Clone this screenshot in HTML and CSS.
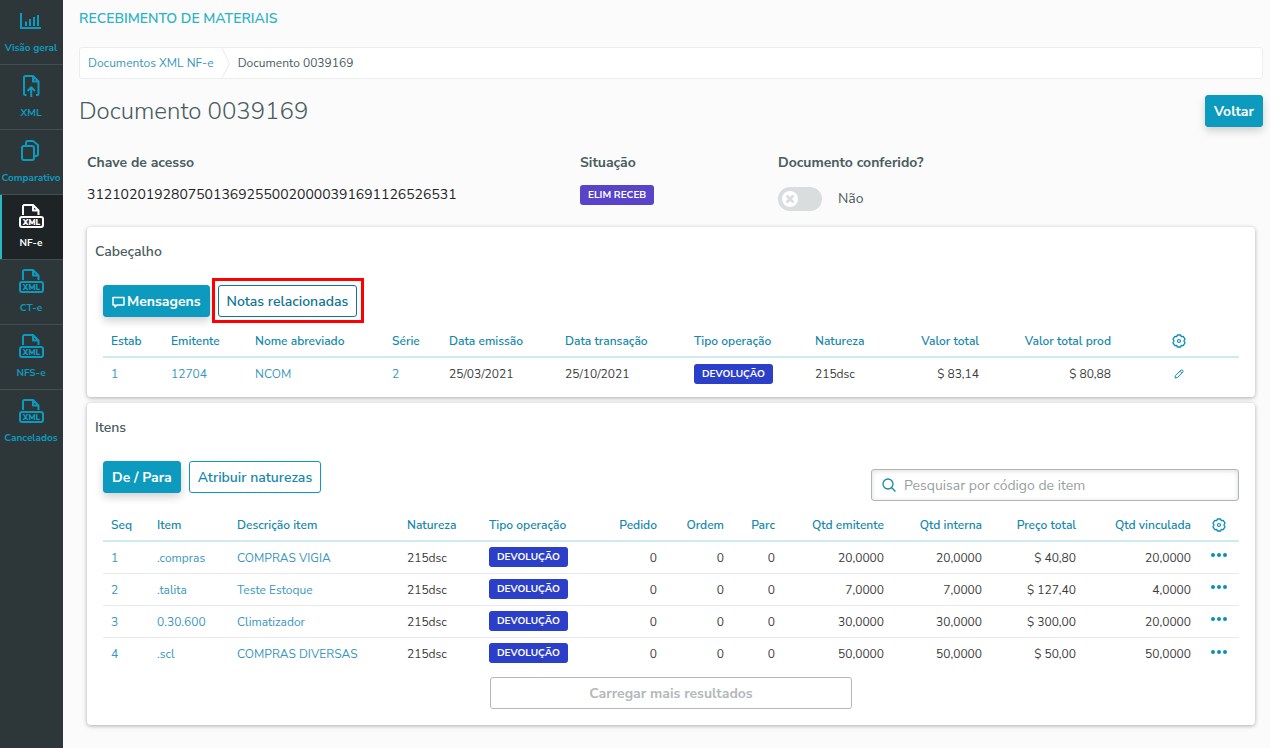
FILE: index.html
```html
<!DOCTYPE html>
<html lang="pt-BR">
<head>
<meta charset="utf-8">
<title>Recebimento de Materiais</title>
<link rel="stylesheet" href="styles.css">
</head>
<body>
<svg class="defs" aria-hidden="true">
  <symbol id="i-xml" viewBox="0 0 26 26">
    <path d="M5 12V3.500Q5 2 6.500 2H15L20.500 7.500V12M15 2V7.500H20.500" fill="none" stroke="currentColor" stroke-width="2" stroke-linejoin="round"/>
    <rect x="2" y="14" width="23" height="10" rx="2" fill="none" stroke="currentColor" stroke-width="2"/>
    <text x="13.500" y="22" text-anchor="middle" class="xml-mark">XML</text>
  </symbol>
  <symbol id="i-gear" viewBox="0 0 14 14">
    <path d="M5.300 1H8.700L9.300 2.700L11.200 2.400L13 5.200L11.900 7L13 8.800L11.200 11.600L9.300 11.300L8.700 13H5.300L4.700 11.300L2.800 11.600L1 8.800L2.100 7L1 5.200L2.800 2.400L4.700 2.700Z" fill="none" stroke="currentColor" stroke-width="1.300" stroke-linejoin="round"/>
    <circle cx="7" cy="7" r="1.500" fill="none" stroke="currentColor" stroke-width="1.200"/>
  </symbol>
  <symbol id="i-dots" viewBox="0 0 18 4">
    <g fill="currentColor"><circle cx="3" cy="2" r="2"/><circle cx="9" cy="2" r="2"/><circle cx="15" cy="2" r="2"/></g>
  </symbol>
</svg>
<div class="app">
  <nav class="menu" aria-label="Menu">
    <a class="menu-item" href="#"><svg class="menu-icon" viewBox="0 0 26 26"><path d="M3 5V20H23" fill="none" stroke="currentColor" stroke-width="2"/><path d="M8 18V13.500M12 18V11M16 18V9M20 18V7" fill="none" stroke="currentColor" stroke-width="2"/></svg><span>Visão geral</span></a>
    <a class="menu-item" href="#"><svg class="menu-icon" viewBox="0 0 26 26"><path d="M8.500 22H7.500Q6 22 6 20.500V4.500Q6 3 7.500 3H15L20.500 8.500V20.500Q20.500 22 19 22H18M15 3V8.500H20.500M13.200 24V15M9.500 18L13.200 14.300L17 18" fill="none" stroke="currentColor" stroke-width="2" stroke-linejoin="round"/></svg><span>XML</span></a>
    <a class="menu-item" href="#"><svg class="menu-icon" viewBox="0 0 26 26"><rect x="4" y="8" width="12" height="14" rx="2" fill="none" stroke="currentColor" stroke-width="2"/><path d="M8 7V5Q8 3 10 3H15L20 7V16Q20 18 18 18H17" fill="none" stroke="currentColor" stroke-width="2" stroke-linejoin="round"/></svg><span>Comparativo</span></a>
    <a class="menu-item active" href="#" aria-current="page"><svg class="menu-icon"><use href="#i-xml"/></svg><span>NF-e</span></a>
    <a class="menu-item" href="#"><svg class="menu-icon"><use href="#i-xml"/></svg><span>CT-e</span></a>
    <a class="menu-item" href="#"><svg class="menu-icon"><use href="#i-xml"/></svg><span>NFS-e</span></a>
    <a class="menu-item" href="#"><svg class="menu-icon"><use href="#i-xml"/></svg><span>Cancelados</span></a>
  </nav>
  <main class="content">
    <div class="product">RECEBIMENTO DE MATERIAIS</div>
    <nav class="breadcrumb" aria-label="Trilha">
      <a href="#">Documentos XML NF-e</a>
      <svg class="crumb-sep" viewBox="0 0 8 30"><path d="M0 0L7.500 15.500L0 30" fill="none" stroke="#e6e9ea"/></svg>
      <span>Documento 0039169</span>
    </nav>
    <header class="page-head">
      <h1>Documento 0039169</h1>
      <button class="btn primary" type="button">Voltar</button>
    </header>
    <section class="info">
      <div class="field"><div class="label">Chave de acesso</div><div class="key">31210201928075013692550020000391691126526531</div></div>
      <div class="field"><div class="label">Situação</div><div class="tag status">ELIM RECEB</div></div>
      <div class="field"><label class="label" for="conf">Documento conferido?</label>
        <div class="switch-row"><span class="switch"><input type="checkbox" role="switch" id="conf"><svg viewBox="0 0 16 16"><circle cx="8" cy="8" r="8" fill="#fff"/><path d="M4.500 4.500L11.500 11.500M11.500 4.500L4.500 11.500" stroke="#d9dddd" stroke-width="2.500"/></svg></span><span>Não</span></div></div>
    </section>
    <section class="card">
      <h2>Cabeçalho</h2>
      <div class="card-body">
        <div class="toolbar">
          <button class="btn primary" type="button"><svg class="msg-icon" viewBox="0 0 13 12"><path d="M1 1.500H12V9H5L3 11V9H1Z" fill="none" stroke="currentColor" stroke-width="1.500" stroke-linejoin="round"/></svg>Mensagens</button>
          <button class="btn marked" type="button">Notas relacionadas</button>
        </div>
        <table>
          <colgroup><col class="h1c"><col class="h2c"><col class="h3c"><col class="h4c"><col class="h5c"><col class="h6c"><col class="h7c"><col class="h8c"><col class="h9c"><col class="h10c"><col class="h11c"></colgroup>
          <thead><tr><th>Estab</th><th>Emitente</th><th>Nome abreviado</th><th>Série</th><th>Data emissão</th><th>Data transação</th><th>Tipo operação</th><th>Natureza</th><th class="num">Valor total</th><th class="num">Valor total prod</th><th class="act"><button class="icon-btn" type="button" aria-label="Configurar colunas"><svg class="gear"><use href="#i-gear"/></svg></button></th></tr></thead>
          <tbody><tr><td><a href="#">1</a></td><td><a href="#">12704</a></td><td><a href="#">NCOM</a></td><td><a href="#">2</a></td><td>25/03/2021</td><td>25/10/2021</td><td><span class="tag">DEVOLUÇÃO</span></td><td>215dsc</td><td class="num">$ 83,14</td><td class="num">$ 80,88</td><td class="act"><button class="icon-btn" type="button" aria-label="Editar"><svg class="pencil" viewBox="0 0 10 10"><path d="M1 9L1.500 6.500L7 1.200Q8 .6 8.800 1.400Q9.400 2.200 8.800 3L3.500 8.500ZM6 2.300L7.700 4" fill="none" stroke="currentColor" stroke-linejoin="round"/></svg></button></td></tr></tbody>
        </table>
      </div>
    </section>
    <section class="card items">
      <h2>Itens</h2>
      <div class="card-body">
        <div class="toolbar">
          <button class="btn primary" type="button">De / Para</button>
          <button class="btn" type="button">Atribuir naturezas</button>
          <label class="search"><svg viewBox="0 0 14 14"><circle cx="6" cy="6" r="5" fill="none" stroke="currentColor" stroke-width="1.300"/><path d="M9.700 9.700L13.500 13.500" stroke="currentColor" stroke-width="1.300"/></svg><input type="text" placeholder="Pesquisar por código de item" aria-label="Pesquisar por código de item"></label>
        </div>
        <table class="items-table">
          <colgroup><col class="i1c"><col class="i2c"><col class="i3c"><col class="i4c"><col class="i5c"><col class="i6c"><col class="i7c"><col class="i8c"><col class="i9c"><col class="i10c"><col class="i11c"><col class="i12c"><col class="i13c"></colgroup>
          <thead><tr><th>Seq</th><th>Item</th><th>Descrição item</th><th>Natureza</th><th>Tipo operação</th><th class="num">Pedido</th><th class="num">Ordem</th><th class="num">Parc</th><th class="num">Qtd emitente</th><th class="num">Qtd interna</th><th class="num">Preço total</th><th class="num">Qtd vinculada</th><th class="act"><button class="icon-btn" type="button" aria-label="Configurar colunas"><svg class="gear"><use href="#i-gear"/></svg></button></th></tr></thead>
          <tbody>
            <tr><td><a href="#">1</a></td><td><a href="#">.compras</a></td><td><a href="#">COMPRAS VIGIA</a></td><td>215dsc</td><td><span class="tag">DEVOLUÇÃO</span></td><td class="num">0</td><td class="num">0</td><td class="num">0</td><td class="num">20,0000</td><td class="num">20,0000</td><td class="num">$ 40,80</td><td class="num">20,0000</td><td class="act"><button class="icon-btn" type="button" aria-label="Ações"><svg class="dots"><use href="#i-dots"/></svg></button></td></tr>
            <tr><td><a href="#">2</a></td><td><a href="#">.talita</a></td><td><a href="#">Teste Estoque</a></td><td>215dsc</td><td><span class="tag">DEVOLUÇÃO</span></td><td class="num">0</td><td class="num">0</td><td class="num">0</td><td class="num">7,0000</td><td class="num">7,0000</td><td class="num">$ 127,40</td><td class="num">4,0000</td><td class="act"><button class="icon-btn" type="button" aria-label="Ações"><svg class="dots"><use href="#i-dots"/></svg></button></td></tr>
            <tr><td><a href="#">3</a></td><td><a href="#">0.30.600</a></td><td><a href="#">Climatizador</a></td><td>215dsc</td><td><span class="tag">DEVOLUÇÃO</span></td><td class="num">0</td><td class="num">0</td><td class="num">0</td><td class="num">30,0000</td><td class="num">30,0000</td><td class="num">$ 300,00</td><td class="num">20,0000</td><td class="act"><button class="icon-btn" type="button" aria-label="Ações"><svg class="dots"><use href="#i-dots"/></svg></button></td></tr>
            <tr><td><a href="#">4</a></td><td><a href="#">.scl</a></td><td><a href="#">COMPRAS DIVERSAS</a></td><td>215dsc</td><td><span class="tag">DEVOLUÇÃO</span></td><td class="num">0</td><td class="num">0</td><td class="num">0</td><td class="num">50,0000</td><td class="num">50,0000</td><td class="num">$ 50,00</td><td class="num">50,0000</td><td class="act"><button class="icon-btn" type="button" aria-label="Ações"><svg class="dots"><use href="#i-dots"/></svg></button></td></tr>
          </tbody>
        </table>
        <button class="btn more" type="button" disabled>Carregar mais resultados</button>
      </div>
    </section>
  </main>
</div>
</body>
</html>
```

FILE: styles.css
```css
* { box-sizing: border-box; }
body {
  margin: 0;
  background: #fbfbfb;
  color: #4a5c60;
  font: 14px/20px "Nunito Sans", Nunito, "Open Sans", sans-serif;
}
a { color: #3b97bd; text-decoration: none; }
button, input { font: inherit; }
svg { display: block; }
.defs { display: none; }

.app { display: flex; min-height: 100vh; }

.menu { flex: 0 0 63px; background: #2d3739; }
.menu-item {
  display: flex;
  flex-direction: column;
  align-items: center;
  gap: 7px;
  height: 65px;
  padding: 8px 1px 0 0;
  border-bottom: 1px solid #424e51;
  color: #0c9abe;
  font-size: 10px;
  line-height: 14px;
  font-weight: 700;
  white-space: nowrap;
}
.menu-item:last-child { border-bottom: 0; }
.menu-item.active {
  background: #1e2426;
  box-shadow: inset 2px 0 #29b6c5;
  color: #fff;
}
.menu-icon { width: 26px; height: 26px; }
.xml-mark { font-size: 8px; line-height: 8px; font-weight: 900; fill: currentColor; }

.content { flex: 1; min-width: 0; padding: 9px 7px 16px 16px; }
.product { color: #2eb3c5; font-weight: 600; }
.breadcrumb {
  display: flex;
  align-items: center;
  height: 32px;
  margin-top: 18px;
  padding-left: 8px;
  border: 1px solid #eceeee;
  border-radius: 3px;
  background: #fff;
  font-size: 12px;
}
.crumb-sep { width: 8px; height: 30px; margin: 0 8px; }
.page-head {
  display: flex;
  justify-content: space-between;
  align-items: center;
  margin-top: 16px;
}
h1 { margin: 0; font-size: 24px; line-height: 32px; font-weight: 300; }

.btn {
  display: inline-flex;
  align-items: center;
  justify-content: center;
  height: 32px;
  padding: 1px 8px 0;
  border: 1px solid #0c9abe;
  border-radius: 3px;
  background: #fff;
  color: #1589ab;
  font-weight: 600;
  white-space: nowrap;
}
.btn.primary {
  background: #0c9abe;
  color: #fff;
  font-weight: 700;
  box-shadow: 0 4px 8px rgba(0, 0, 0, .18);
}
.msg-icon { width: 13px; height: 12px; margin-right: 2px; }

.info {
  display: grid;
  grid-template-columns: 493fr 198fr 477fr;
  padding: 26px 8px 0;
  height: 100px;
}
.field { min-width: 0; }
.label { display: block; font-weight: 700; }
.key { margin-top: 12px; color: #1d2426; }
.switch-row { display: flex; align-items: center; gap: 16px; margin-top: 14px; line-height: 24px; }
.switch { position: relative; width: 44px; height: 24px; }
.switch input {
  appearance: none;
  display: block;
  width: 44px;
  height: 24px;
  margin: 0;
  border-radius: 12px;
  background: #d9dddd;
}
.switch svg { position: absolute; left: 4px; top: 4px; width: 16px; height: 16px; pointer-events: none; }

.tag {
  display: block;
  width: max-content;
  padding: 0 8px;
  border-radius: 3px;
  background: #2c3fc8;
  color: #fff;
  font-size: 10px;
  line-height: 20px;
  font-weight: 700;
}
.tag.status { margin-top: 12px; background: #5843c9; }

.card {
  margin: 0 8px 6px;
  padding: 15px 8px 7px;
  border-radius: 4px;
  background: #fff;
  box-shadow: 0 1px 4px rgba(0, 0, 0, .32);
}
.card.items { padding-bottom: 16px; margin-bottom: 0; }
.card h2 { margin: 0; font-size: 14px; line-height: 20px; font-weight: 600; }
.card-body { padding: 23px 8px 0; }
.toolbar { display: flex; gap: 8px; }
.marked { position: relative; border-color: #0f7593; color: #0f7593; }
.marked::after {
  content: "";
  position: absolute;
  inset: -8px -8px -7px -7px;
  border: 3px solid #f00;
}
.search {
  display: flex;
  align-items: center;
  gap: 8px;
  width: 368px;
  height: 32px;
  margin: 8px 0 0 auto;
  padding: 0 10px;
  border: 1px solid #aeb6b8;
  border-radius: 3px;
  box-shadow: inset 0 1px 5px rgba(0, 0, 0, .14);
  color: #1589ab;
}
.search svg { width: 14px; height: 14px; }
.search input { flex: 1; min-width: 0; padding: 1px 0 0; border: 0; outline: 0; background: none; }
.search input::placeholder { color: #9a9fa0; opacity: 1; }

table {
  width: 100%;
  margin-top: 8px;
  border-collapse: separate;
  border-spacing: 0;
  table-layout: fixed;
  font-size: 12px;
  line-height: 16px;
}
th, td { padding: 0 8px; text-align: left; white-space: nowrap; }
th { height: 33px; border-bottom: 2px solid #cdeaf1; color: #1589ab; font-weight: 600; }
td { height: 32px; border-bottom: 1px solid #eaeaea; color: #3c3c3c; }
tr:last-child td { border-bottom: 0; }
th.num, td.num { text-align: right; }
th.act, td.act { padding: 0 0 2px; text-align: center; }
.items-table .tag { margin-bottom: 2px; }
.items-table .dots { margin-bottom: 5px; }
.icon-btn { display: inline-block; padding: 0; border: 0; background: none; color: #0c8fb5; vertical-align: middle; }
.gear { width: 14px; height: 14px; }
.pencil { width: 10px; height: 10px; }
.dots { width: 18px; height: 4px; }

.h1c { width: 60px; }
.h2c { width: 84px; }
.h3c { width: 137px; }
.h4c { width: 57px; }
.h5c { width: 116px; }
.h6c { width: 129px; }
.h7c { width: 121px; }
.h8c { width: 75px; }
.h9c { width: 105px; }
.h10c { width: 132px; }
.h11c { width: 120px; }

.i1c { width: 46px; }
.i2c { width: 80px; }
.i3c { width: 170px; }
.i4c { width: 82px; }
.i5c { width: 95px; }
.i6c { width: 89px; }
.i7c { width: 67px; }
.i8c { width: 51px; }
.i9c { width: 109px; }
.i10c { width: 98px; }
.i11c { width: 94px; }
.i12c { width: 115px; }
.i13c { width: 40px; }

.btn.more {
  display: flex;
  width: 362px;
  margin: 7px auto 0;
  border-color: #b3b9ba;
  color: #b3b9ba;
  font-weight: 700;
}
```
